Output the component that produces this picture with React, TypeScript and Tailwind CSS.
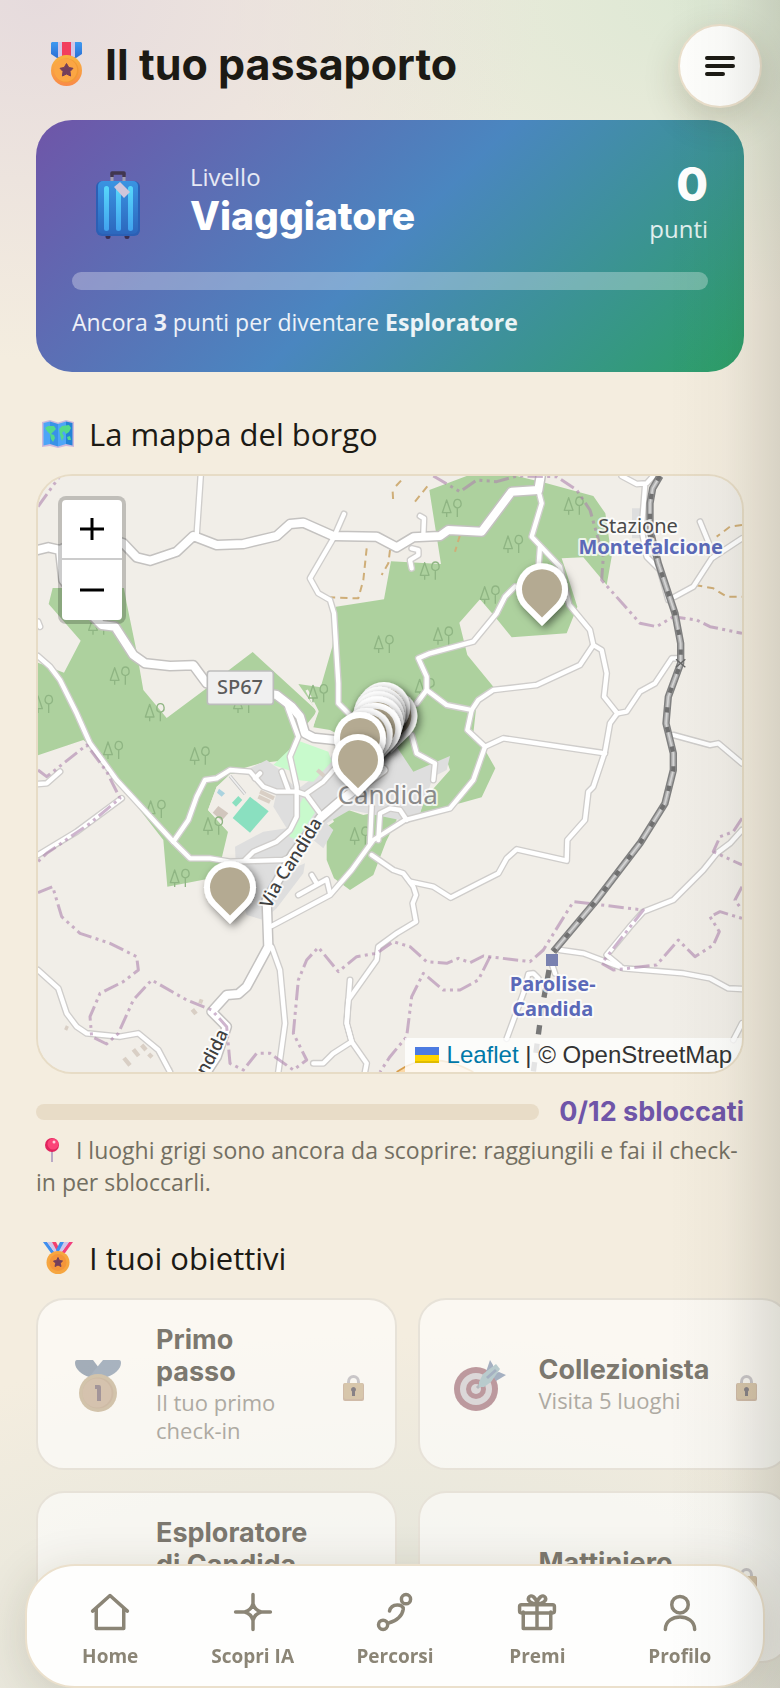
import React from 'react';

interface Achievement {
  title: string;
  text: string;
  icon: React.ReactNode;
}

const roadsMain = [
  'M24 240L55 232L90 240L100 330L170 420L215 465L255 470L310 555L345 580L420 588L490 586L530 640L740 675L785 710L810 740L825 790L850 803L915 810L990 830',
  'M90 240L190 190L280 220L320 262L360 272L440 245L490 198L560 225L640 222L740 198L780 162L820 158L910 198L1040 200L1100 232L1150 202L1230 198L1255 180L1355 185L1445 65L1525 60L1532 18',
  'M1060 900L940 985L870 1045L790 1150L710 1290L715 1430L650 1550L625 1572L590 1575L545 1625L590 1670L560 1760L530 1806',
];

const roadsMinor = [
  'M512 18L500 195',
  'M942 132L910 205L840 325L865 370L900 390L912 430L925 640L925 700L960 735',
  'M24 558L60 590L90 630L140 730L180 820L260 930L430 1115L480 1165L540 1165L600 1175L760 1170L800 1150',
  'M430 1115L475 1050L500 980L525 930L560 925L600 900L660 905L700 950L740 965L800 965L830 975L870 1030',
  'M770 705L805 800L780 860L800 950L800 1040L780 1080L740 1115L670 1145L645 1170',
  'M830 970L880 935L920 890',
  'M755 905L775 960M675 925L690 910',
  'M24 1155L140 1085L275 985',
  'M24 942L50 940L90 905',
  'M24 1500L85 1555L110 1630L140 1670L170 1690L270 1700L325 1690L385 1740L420 1806',
  'M725 1430L750 1500L765 1660L745 1806',
  'M725 1368L900 1275L965 1200L1030 1110L1125 1050L1260 1015L1330 930L1365 830',
  'M1025 1010L1020 1120M1045 1110L1050 1030L1080 1015L1110 1020L1130 1050',
  'M1025 1155L1090 1200L1120 1210L1150 1250L1158 1275L1148 1300L1158 1355L1100 1390L1045 1430L1040 1470L955 1590L950 1660L965 1715L1010 1780L1005 1806',
  'M1140 1235L1210 1250L1262 1283L1350 1238L1405 1210L1430 1165L1460 1138L1610 1172L1612 1110L1665 1050L1675 965L1690 950L1725 845L1740 760L1762 730L1722 680L1730 610L1715 540L1690 525L1680 480L1618 405L1590 290L1505 200L1535 100L1525 60',
  'M1530 230L1525 300',
  'M1455 350L1425 380L1400 430L1330 515L1200 550L1165 565L1190 620L1190 660L1160 700',
  'M1190 660L1250 705L1325 720L1345 690L1390 660L1520 645L1650 585L1690 525',
  'M1325 720L1312 780L1365 830L1420 805L1725 850',
  'M1945 565L1925 565L1875 640L1830 665L1790 725L1762 730',
  'M1930 795L2040 825L2065 820L2136 880',
  'M1775 18L1820 42L1850 40L1870 18M1845 50L1835 180L1850 260L1890 300L1915 390',
  'M2010 155L2045 240M2136 205L2045 265L1990 350L1935 380',
  'M1590 1440L1660 1450L1780 1495L1960 1510L2040 1525L2095 1555L2136 1557',
  'M1730 1455L1800 1370L1840 1325L1930 1290L2020 1200L2060 1150L2100 1120L2136 1080M1730 1455L1770 1488',
  'M1430 1706L1480 1570L1495 1512L1510 1510L1525 1525M1565 1480L1575 1510',
  'M2136 1660L2110 1710',
  'M850 1780L880 1780L910 1750L965 1715L950 1660L960 1530',
  'M805 1275L890 1228L900 1270M845 1215L860 1240',
  'M1170 138L1182 145L1180 195M1145 235L1165 240L1165 255L1140 270L1145 295',
  'M1145 795L1160 850L1215 880L1210 930',
  'M24 455L30 470',
];

const borders = [
  'M24 110L90 18',
  'M24 900L50 920L170 825L230 905L270 985L180 1060L50 1150L24 1175',
  'M24 1268L68 1250L95 1340L150 1390L240 1420L320 1460L325 1500L280 1535L210 1570L180 1640L185 1700L230 1722L265 1690L310 1590L365 1530L470 1590L545 1620L590 1670L600 1780L640 1800L680 1750L720 1750L790 1800L830 1770L790 1690L805 1530L830 1470L865 1432L925 1505L980 1460L1040 1450L1090 1415L1140 1430L1190 1475L1250 1480L1285 1465L1320 1478L1360 1458L1500 1475L1540 1440L1630 1295L1840 1320L1715 1480L1750 1500L1880 1485L1945 1410L1995 1460L2050 1425L2068 1385L2040 1340L2070 1325L2136 1345',
  'M1380 1460L1345 1530L1290 1560L1240 1560L1180 1510L1145 1580L1130 1700L1080 1760L1050 1806',
  'M1210 18L1290 65L1340 30L1400 35L1460 18L1580 20L1640 60L1680 120L1720 260L1715 330L1830 460L1880 470L1930 440L2000 450L2040 470L2136 490',
  'M2136 1045L2110 1085L2070 1100L2050 1145L2136 1185M2136 1250L2115 1290L2136 1320',
];

const tracks = [
  'M1010 235L1000 330L985 385L895 382',
  'M1080 240L1075 280L1055 315',
  'M1088 65L1090 100M1098 48L1115 30M1155 95L1195 45',
  'M1290 195L1275 245',
  'M2136 165L2100 170L2060 200',
  'M1995 345L2050 355L2090 380L2136 380',
];

const railway =
  'M1890 18L1868 55L1860 100V180L1885 280L1935 430L1952 520V580L1915 680L1908 760L1930 850V900L1905 1000L1830 1120L1700 1290L1570 1445';

const trees = [
  [270, 615], [40, 700], [250, 838], [510, 855], [1062, 520], [865, 668], [375, 725], [640, 700],
  [1266, 112], [1632, 105], [1450, 220], [1200, 300], [1380, 372], [1240, 495], [1185, 650],
  [378, 1015], [450, 1222], [550, 1065], [990, 1095], [205, 465],
];

// Drawn back to front, so the southern pins cover the northern ones
const pins = [
  [1536, 358], [1084, 738], [1062, 714], [1050, 728], [1046, 742],
  [1042, 757], [1036, 776], [1010, 792], [990, 804], [984, 870], [600, 1252],
];

const VillageMap: React.FC = () => (
  <svg
    className="block h-full w-full"
    viewBox="24 18 2112 1788"
    preserveAspectRatio="xMidYMid slice"
    fill="none"
    strokeLinejoin="round"
    role="img"
    aria-label="Mappa di Candida"
  >
    <defs>
      <path id="via" d="M722 1318Q752 1250 785 1205T884 1046" />
      <path id="via-sud" d="M512 1845Q560 1770 606 1665" />
      <filter id="pin-shadow" x="-60%" y="-60%" width="240%" height="240%">
        <feDropShadow dx="8" dy="9" stdDeviation="13" floodColor="#000" floodOpacity="0.5" />
      </filter>
    </defs>
    <rect x="24" y="18" width="2112" height="1788" fill="#f1eee8" />

    {/* woods */}
    <g fill="#add19e">
      <path d="M68 354L56 402L152 512L102 608L24 578V856L160 810L180 825L260 930L400 1110L412 1250L578 1218L575 1165L594 1085L534 1020L560 950L640 895L690 880L770 870L800 800L862 724L668 546L600 598L530 655L410 744L340 660L320 545L290 400L282 354Z" />
      <path d="M805 642L872 652L907 530L918 410L1062 388L1083 274L1233 282L1198 60L1310 18H1460L1550 40L1690 78L1726 130L1745 260L1730 345L1660 262L1595 265L1610 310L1642 410L1610 490L1445 502L1395 440L1350 388L1288 458L1312 555L1390 650L1340 700L1330 790L1365 840L1396 895L1355 982L1290 1000L1170 1030L1180 990L1260 900L1250 870L1150 920L1110 925L1050 860L900 780L850 772L862 724Z" />
      <path d="M890 1070L912 1055L905 1040L955 1020L1000 1035L1095 1015L1100 1050L1068 1115L1030 1215L960 1260L912 1225L890 1170Z" />
    </g>
    <path d="M830 660L862 724L845 770" stroke="#f1eee8" strokeWidth="8" />

    {/* built-up area and parks */}
    <g fill="#dedede">
      <path d="M640 905L710 870L750 900L800 960L880 900L920 830L960 830L990 850L1080 800L1150 905L1260 858L1250 900L1210 920L1170 1030L1110 1050L1010 1030L960 1020L890 1060L910 1080L880 1135L850 1110L780 1200L800 1190L825 1180L820 1210L740 1315L700 1350L650 1335L620 1240L615 1130L700 1085L770 1075L730 1010L740 965L700 950Z" />
      <path d="M1806 115H1835V205H1806Z" />
    </g>
    <path d="M730 885L805 812L895 845L905 875L850 935L800 930L790 905Z" fill="#c8facc" />
    <path d="M820 982L860 1020L800 1110L778 1100L795 1030Z" fill="#c8facc" />
    <path d="M534 1020L560 950L600 912L650 910L690 955L735 970L722 1020L735 1050L700 1080L615 1115L594 1085Z" fill="#f1eee8" />
    <path d="M660 980L716 1024L660 1088L608 1044Z" fill="#8ae0c0" />
    <path d="M625 978L637 990L618 1010L606 998Z" fill="#8ae0c0" />
    <path d="M565 1008L595 1030L575 1052L548 1028Z" fill="#d1c6bd" />
    <path d="M567 956L585 970L575 980L561 968Z" fill="#aad3df" />
    <path d="M690 965L732 985M685 980L720 996M862 900L885 920" stroke="#d9cfc5" strokeWidth="12" />
    <path d="M600 918L645 972" stroke="#c4c4c4" strokeWidth="10" />
    <path d="M600 918L645 972" stroke="#eee" strokeWidth="5" />
    <path d="M282 1764L300 1786M310 1738L326 1758M335 1725L348 1740M356 1752L366 1762M487 1618L498 1632M507 1592L518 1596M415 1796L425 1800M105 1672L114 1676" stroke="#d9cfc5" strokeWidth="13" />

    <g stroke="#8fb583" strokeWidth="4">
      {trees.map(([x, y]) => (
        <path
          key={`${x}-${y}`}
          d={`M${x - 16} ${y - 22}L${x - 29} ${y + 16}H${x - 3}ZM${x - 16} ${y + 16}V${y + 29}M${x + 16} ${y + 2}C${x - 2} ${y - 2} ${x + 6} ${y - 24} ${x + 16} ${y - 24}C${x + 28} ${y - 24} ${x + 34} ${y - 2} ${x + 16} ${y + 2}V${y + 29}`}
        />
      ))}
    </g>

    <g stroke="#cfae78" strokeWidth="6" strokeDasharray="22 15">
      {tracks.map((d) => <path key={d} d={d} />)}
    </g>
    <path d="M1100 1806Q1200 1735 1330 1806" fill="#fbd9a8" stroke="#d79e4d" strokeWidth="5" />

    <g strokeLinecap="round">
      <g stroke="#cfcdcb" strokeWidth="21">
        {roadsMinor.map((d) => <path key={d} d={d} />)}
      </g>
      <g stroke="#c4c2c0" strokeWidth="33">
        {roadsMain.map((d) => <path key={d} d={d} />)}
      </g>
      <g stroke="#fff" strokeWidth="13">
        {roadsMinor.map((d) => <path key={d} d={d} />)}
      </g>
      <g stroke="#fff" strokeWidth="24">
        {roadsMain.map((d) => <path key={d} d={d} />)}
      </g>
    </g>

    <g stroke="#ad84ae" strokeOpacity="0.6" strokeWidth="9" strokeDasharray="46 13 9 13 9 13">
      {borders.map((d) => <path key={d} d={d} />)}
    </g>

    {/* railway */}
    <path d={railway} stroke="#808080" strokeWidth="22" />
    <path d={railway} stroke="#b0b0b0" strokeWidth="13" />
    <path d={railway} stroke="#d4d4d4" strokeWidth="5" />
    <path d={railway} stroke="#707070" strokeWidth="13" strokeDasharray="16 44" />
    <path d="M1938 568L1966 592M1966 568L1938 592" stroke="#666" strokeWidth="4" />
    <path d="M1557 1500L1535 1620L1510 1806" stroke="#777" strokeWidth="16" strokeDasharray="28 28" />
    <rect x="1548" y="1452" width="36" height="36" fill="#7981b0" />

    {/* labels */}
    <rect x="532" y="603" width="198" height="100" rx="8" fill="#f0f0f0" stroke="#bdbdbd" strokeWidth="5" />
    <g
      fontFamily='"Noto Sans", sans-serif'
      textAnchor="middle"
      stroke="#fff"
      strokeOpacity="0.8"
      strokeWidth="12"
      style={{ paintOrder: 'stroke' }}
    >
      <text x="630" y="673" fontSize="60" fontWeight="500" fill="#5c5c5c" stroke="none">SP67</text>
      <text x="1824" y="190" fontSize="60" fill="#4a4a4a">Stazione</text>
      <text x="1862" y="252" fontSize="60" fontWeight="700" fill="#5b69b8">Montefalcione</text>
      <text x="1568" y="1564" fontSize="60" fontWeight="700" fill="#5b69b8">Parolise-</text>
      <text x="1568" y="1637" fontSize="60" fontWeight="700" fill="#5b69b8">Candida</text>
      <text x="1073" y="1003" fontSize="78" fill="#8a8a8a">Candida</text>
      <g textAnchor="start" fontSize="54" fontWeight="500" fill="#3f3f3f">
        <text><textPath href="#via">Via Candida</textPath></text>
        <text><textPath href="#via-sud">andida</textPath></text>
      </g>
    </g>

    {pins.map(([x, y]) => (
      <g key={`${x}-${y}`} transform={`translate(${x} ${y})`} filter="url(#pin-shadow)">
        <g transform="rotate(-45)">
          <path d="M-78 0A78 78 0 1 1 0 78H-78Z" fill="#fff" />
          <path d="M-60 0A60 60 0 1 1 0 60H-60Z" fill="#b4aa92" />
        </g>
      </g>
    ))}
  </svg>
);

const MilitaryMedal: React.FC = () => (
  <svg className="h-[44px] w-[31px] shrink-0" viewBox="0 0 31 44" aria-hidden="true">
    <defs>
      <linearGradient id="mm-blue" x1="0" y1="0" x2="0" y2="1">
        <stop stopColor="#3f9af0" /><stop offset="1" stopColor="#2b6fd4" />
      </linearGradient>
      <linearGradient id="mm-gold" x1="0" y1="0" x2="0" y2="1">
        <stop stopColor="#f8b540" /><stop offset="1" stopColor="#f98a48" />
      </linearGradient>
    </defs>
    <path d="M1 0H30L31 1V12L25 16H6L0 12V1Z" fill="url(#mm-blue)" />
    <path d="M7 0H24V15H7Z" fill="#d3c6e6" />
    <path d="M11 0H20V15H11Z" fill="#f23f5e" />
    <circle cx="15.500" cy="28.500" r="15.500" fill="url(#mm-gold)" />
    <circle cx="15.500" cy="28.500" r="12" fill="#f29a35" />
    <circle cx="14.500" cy="28" r="11.500" fill="#fba644" />
    <path d="M15.500 21.500L17.800 25.500L22 26.300L19 29.500L19.600 34L15.500 32L11.400 34L12 29.500L9 26.300L13.200 25.500Z" fill="#743f5b" strokeLinejoin="round" stroke="#743f5b" />
  </svg>
);

const Suitcase: React.FC = () => (
  <svg className="h-[68px] w-[44px]" viewBox="0 0 44 68" aria-hidden="true">
    <defs>
      <linearGradient id="sc-body" x1="0" y1="0" x2="0" y2="1">
        <stop stopColor="#3a94e2" /><stop offset="1" stopColor="#2c67bd" />
      </linearGradient>
      <linearGradient id="sc-rib" x1="0" y1="0" x2="0" y2="1">
        <stop stopColor="#58d8fb" /><stop offset="1" stopColor="#41a2ee" />
      </linearGradient>
    </defs>
    <path d="M16 4V12M28 4V12" stroke="#a39eae" strokeWidth="3" />
    <path d="M16 6V2H28V6" fill="none" stroke="#41364f" strokeWidth="3.500" strokeLinejoin="round" />
    <circle cx="12" cy="65.500" r="2.500" fill="#3a2f52" />
    <circle cx="31" cy="65.500" r="2.500" fill="#3a2f52" />
    <rect y="10" width="44" height="55" rx="6" fill="#2b5fb5" />
    <rect x="2" y="10" width="40" height="53" rx="5" fill="url(#sc-body)" />
    <g fill="url(#sc-rib)">
      <rect x="8" y="15" width="5" height="45" rx="2.500" />
      <rect x="20" y="15" width="5" height="45" rx="2.500" />
      <rect x="32" y="15" width="5" height="45" rx="2.500" />
    </g>
    <path d="M18 16L24 11L34 21L28 27Z" fill="#d0c6da" />
  </svg>
);

const WorldMap: React.FC = () => (
  <svg className="h-[28px] w-[32px] shrink-0" viewBox="0 0 32 28" aria-hidden="true">
    <path d="M0 2L8 0L16 2.500L24 0L32 2V27L24 26L16 28L8 26L0 27Z" fill="#cdb8dc" />
    <path d="M1.500 3L8 1.500V24L1.500 25.500Z" fill="#4da5f7" />
    <path d="M8 1.500L16 4V26.500L8 24Z" fill="#3992e8" />
    <path d="M16 4L24 1.500V24L16 26.500Z" fill="#4da5f7" />
    <path d="M24 1.500L30.500 3V25.500L24 24Z" fill="#2383d8" />
    <path d="M3 8L6 6L12 6L14 9L11 12L9 14L12 15L13 18L11 22L9 19L8 14L5 11ZM17 9L20 6L27 5L29 8L27 12L24 14L22 11L20 13L22 16L20 21L18 15ZM25 17L28 16L29 20L26 20Z" fill="#53d98b" />
  </svg>
);

const Pushpin: React.FC = () => (
  <svg className="inline-block h-[24px] w-[16px] align-[-3px]" viewBox="0 0 16 24" aria-hidden="true">
    <path d="M8 12V24" stroke="#b9a9c6" strokeWidth="2" />
    <circle cx="8" cy="7" r="7" fill="#e0245e" />
    <circle cx="9" cy="6" r="5.500" fill="#fb4478" />
    <circle cx="10" cy="4" r="1.500" fill="#ffd0de" />
  </svg>
);

const SportsMedal: React.FC = () => (
  <svg className="h-[32px] w-[30px] shrink-0" viewBox="0 0 30 32" aria-hidden="true">
    <path d="M0 0H4L12 11L8 11Z" fill="#3f8fee" />
    <path d="M4 0H9L16 11H12Z" fill="#cfc5ea" />
    <path d="M9 0H13L17 8L15 11Z" fill="#f23f6e" />
    <path d="M30 0H26L18 11L22 11Z" fill="#f23f7e" />
    <path d="M26 0H21L14 11H18Z" fill="#cfc5ea" />
    <path d="M21 0H17L13 8L15 11Z" fill="#3f8fee" />
    <circle cx="15" cy="20.500" r="11.500" fill="#f6a640" />
    <circle cx="15" cy="20.500" r="8.500" fill="#f4953a" />
    <path d="M15 15.500L16.500 18.500L19.500 19L17.300 21.200L18 24.500L15 23L12 24.500L12.700 21.200L10.500 19L13.500 18.500Z" fill="#743f5b" stroke="#743f5b" strokeLinejoin="round" />
  </svg>
);

const FirstMedal: React.FC = () => (
  <svg className="h-[52px] w-[46px]" viewBox="0 0 46 52" aria-hidden="true">
    <path d="M2 0H18L24 8L32 17H14C7 15 0 9 0 3Q0 0 2 0Z" fill="#5c7089" />
    <path d="M44 0H28L14 17H32C39 15 46 9 46 3Q46 0 44 0Z" fill="#667b96" />
    <circle cx="23" cy="33" r="19" fill="#b39a72" />
    <circle cx="23" cy="33" r="15.500" fill="#ab8a68" />
    <circle cx="22" cy="33" r="14.500" fill="#b89877" />
    <path d="M20 27H24V41" fill="none" stroke="#5d4652" strokeWidth="4" strokeLinejoin="round" />
  </svg>
);

const Target: React.FC = () => (
  <svg className="h-[52px] w-[52px]" viewBox="0 0 52 52" aria-hidden="true">
    <circle cx="22" cy="29" r="22" fill="#8c4e5a" />
    <circle cx="22" cy="29" r="16" fill="#c4bec4" />
    <circle cx="22" cy="29" r="10" fill="#8c4e5a" />
    <circle cx="22" cy="29" r="5" fill="#c4bec4" />
    <path d="M23 28L31 20" stroke="#7c8490" strokeWidth="3" />
    <path d="M32 12L36 0L39 5V13ZM38 14L45 12L52 15L42 21Z" fill="#60779a" />
    <path d="M25 22L29 14L42 4L46 9L37 22L30 27L25 27Z" fill="#84a8b0" />
    <path d="M33 18L42 10" stroke="#60779a" strokeWidth="3" />
  </svg>
);

const Lock: React.FC = () => (
  <svg className="h-[26px] w-[21px] shrink-0" viewBox="0 0 21 26" aria-hidden="true">
    <path d="M5.500 10V7A5 5.500 0 0 1 15.500 7V10" fill="none" stroke="#aaa6ad" strokeWidth="3" />
    <rect y="8" width="21" height="18" rx="2" fill="#b59478" />
    <rect x="1" y="8" width="19" height="16" rx="2" fill="#c2a67c" />
    <path d="M10.500 12A2.500 2.500 0 0 1 12 16.500V21H9V16.500A2.500 2.500 0 0 1 10.500 12Z" fill="#3c3440" />
  </svg>
);

const Sunrise: React.FC = () => (
  <svg className="h-[24px] w-[46px]" viewBox="0 0 46 24" aria-hidden="true">
    <path d="M10 18A13 13 0 0 1 36 18Z" fill="#cba86f" />
    <path d="M2 21H44" stroke="#7d90b0" strokeWidth="4" />
  </svg>
);

const achievements: Achievement[] = [
  { title: 'Primo passo', text: 'Il tuo primo check-in', icon: <FirstMedal /> },
  { title: 'Collezionista', text: 'Visita 5 luoghi', icon: <Target /> },
  { title: 'Esploratore di Candida', text: 'Visita tutti i luoghi', icon: <WorldMap /> },
  { title: 'Mattiniero', text: 'Visita all’alba', icon: <Sunrise /> },
];

const navItems = [
  {
    label: 'Home',
    icon: <path d="M2.500 11.500L12 3L21.500 11.500M4.500 10V21H19.500V10" />,
  },
  {
    label: 'Scopri IA',
    icon: <path d="M12 2.500V7.500M12 16.500V21.500M2.500 12H7.500M16.500 12H21.500M12 7.500Q13 11 16.500 12Q13 13 12 16.500Q11 13 7.500 12Q11 11 12 7.500Z" />,
  },
  {
    label: 'Percorsi',
    icon: (
      <>
        <circle cx="5.500" cy="19" r="2.500" />
        <circle cx="18" cy="5" r="2.500" />
        <path d="M8.500 18C13 17 16 14 16.500 10.500C16.800 7.500 10 7 9 11.500" />
      </>
    ),
  },
  {
    label: 'Premi',
    icon: (
      <>
        <path d="M4.500 12V21H19.500V12M12 8V21" />
        <rect x="2.500" y="8" width="19" height="4.500" rx="1" />
        <path d="M12 7.500C9 7.500 6.500 6 7.500 4C8.700 2 11.500 4 12 7.500ZM12 7.500C15 7.500 17.500 6 16.500 4C15.300 2 12.500 4 12 7.500Z" />
      </>
    ),
  },
  {
    label: 'Profilo',
    icon: (
      <>
        <circle cx="12" cy="8" r="4.500" />
        <path d="M4 21.500C4 12.500 20 12.500 20 21.500" />
      </>
    ),
  },
];

const App: React.FC = () => {
  return (
    <div className="relative min-h-screen overflow-hidden bg-[#f4eddf] bg-[radial-gradient(ellipse_560px_400px_at_5%_0%,#e6dbdd_0%,transparent_90%),radial-gradient(ellipse_540px_340px_at_90%_0%,#dde8d4_0%,transparent_90%),radial-gradient(ellipse_760px_360px_at_50%_100%,#dfe3da_0%,transparent_100%)] px-9 pb-8 font-['Open_Sans','Noto_Sans',sans-serif] text-[#1c1a14]">
      <header className="-mr-[18px] flex items-center justify-between pt-6">
        <h1 className="flex items-center gap-[23px] pb-1 pl-[15px] font-['Inter',sans-serif] text-[43px] leading-[52px] font-bold">
          <MilitaryMedal />
          Il tuo passaporto
        </h1>
        <button
          type="button"
          aria-label="Menu"
          className="flex h-[84px] w-[84px] items-center justify-center rounded-full border-2 border-[#ebe0cc] bg-[#fefefc] shadow-[0_12px_36px_rgba(60,50,20,0.2)]"
        >
          <svg className="h-[36px] w-[36px]" viewBox="0 0 36 36" fill="none" stroke="currentColor" strokeWidth="4" strokeLinecap="round">
            <path d="M5 10H31M5 18H31M5 26H21" />
          </svg>
        </button>
      </header>

      <section className="mt-3 rounded-[36px] bg-[linear-gradient(135deg,#6f55a8_0%,#4a86c0_50%,#2ca066_100%)] px-9 pt-9 pb-8 text-white">
        <div className="flex items-center">
          <div className="flex w-[92px] justify-center pt-2">
            <Suitcase />
          </div>
          <div className="ml-[26px] flex-1 pb-1">
            <p className="text-[24px] leading-[34px] text-white/85">Livello</p>
            <p className="font-['Inter',sans-serif] text-[39px] leading-[44px] font-extrabold">Viaggiatore</p>
          </div>
          <div className="text-right">
            <p className="font-['Inter',sans-serif] text-[46px] leading-[56px] font-extrabold">0</p>
            <p className="text-[24px] leading-[34px] text-white/85">punti</p>
          </div>
        </div>
        <div className="mt-[26px] h-[18px] rounded-full bg-white/30" role="progressbar" aria-valuenow={0} aria-label="Livello" />
        <p className="mt-[14px] text-[23px] leading-[36px] text-white/90">
          Ancora <b>3</b> punti per diventare <b>Esploratore</b>
        </p>
      </section>

      <h2 className="mt-[42px] flex items-center gap-[15px] pl-[6px] text-[31px] leading-[40px]">
        <WorldMap />
        La mappa del borgo
      </h2>

      <div className="relative mt-5 h-[600px] overflow-hidden rounded-[36px] border-2 border-[#e7dcc6]">
        <VillageMap />
        <div className="absolute top-5 left-5 flex w-[68px] flex-col rounded-[8px] border-4 border-black/20 bg-white bg-clip-padding">
          <button type="button" aria-label="Zoom avanti" className="flex h-[60px] items-center justify-center border-b-2 border-[#ccc]">
            <svg className="h-6 w-6" viewBox="0 0 24 24" stroke="#000" strokeWidth="3"><path d="M0 12H24M12 1V23" /></svg>
          </button>
          <button type="button" aria-label="Zoom indietro" className="flex h-[60px] items-center justify-center">
            <svg className="h-6 w-6" viewBox="0 0 24 24" stroke="#000" strokeWidth="3"><path d="M0 12H24" /></svg>
          </button>
        </div>
        <div className="absolute right-0 bottom-0 flex items-center bg-white/80 px-[10px] font-['Liberation_Sans',Arial,sans-serif] text-[24px] leading-[34px] text-[#333]">
          <svg className="mr-2 h-4 w-6" viewBox="0 0 24 16" aria-hidden="true">
            <path d="M0 0H24V8H0Z" fill="#4c7be1" />
            <path d="M0 8H24V16H0Z" fill="#ffd500" />
            <path d="M0 14H24V16H0Z" fill="#e0bc00" />
          </svg>
          <a href="#leaflet" className="text-[#0078a8]">Leaflet</a>
          <span className="whitespace-pre"> | © OpenStreetMap</span>
        </div>
      </div>

      <div className="mt-5 flex items-center gap-5">
        <div className="h-4 flex-1 rounded-full bg-[#e8dcc7]" role="progressbar" aria-valuenow={0} aria-valuemax={12} aria-label="Luoghi sbloccati" />
        <p className="font-['Inter',sans-serif] text-[27px] leading-[36px] font-bold text-[#6f55a8]">0/12 sbloccati</p>
      </div>
      <p className="mt-1 text-[23px] leading-[32px] text-[#736f62]">
        <span className="mr-[10px] ml-2"><Pushpin /></span> I luoghi grigi sono ancora da scoprire: raggiungili e fai il check-in per sbloccarli.
      </p>

      <h2 className="mt-10 flex items-center gap-4 pl-[7px] text-[31px] leading-[40px]">
        <SportsMedal />
        I tuoi obiettivi
      </h2>

      <ul className="mt-5 -mr-[46px] grid grid-cols-[minmax(0,36fr)_minmax(0,37fr)] gap-[21px]">
        {achievements.map((item) => (
          <li
            key={item.title}
            className="flex items-center rounded-[28px] border-2 border-[#e7e2d8] bg-white/60 px-[31px] py-6"
          >
            <div className="flex w-[57px] shrink-0 justify-center pt-1 opacity-55">{item.icon}</div>
            <div className="mr-[26px] ml-[30px] min-w-0 flex-1">
              <h3 className="font-['Inter',sans-serif] text-[27px] leading-[32px] font-bold text-[#7c786f]">{item.title}</h3>
              <p className="text-[22px] leading-[28px] text-[#aeaaa2]">{item.text}</p>
            </div>
            <div className="pt-2 opacity-60"><Lock /></div>
          </li>
        ))}
      </ul>

      <nav className="fixed right-[15px] bottom-0 left-[25px] flex h-[124px] items-start rounded-[50px] border-2 border-[#ebe0cc] bg-[#fefefd] px-3 pt-[24px] shadow-[0_8px_48px_rgba(60,50,20,0.16)]">
        {navItems.map((item) => (
          <a key={item.label} href={`#${item.label}`} className="flex flex-1 flex-col items-center gap-2 text-[19px] leading-[28px] font-bold text-[#8b8576]">
            <svg className="h-[44px] w-[44px]" viewBox="0 0 24 24" fill="none" stroke="currentColor" strokeWidth="1.900" strokeLinecap="round" strokeLinejoin="round">
              {item.icon}
            </svg>
            {item.label}
          </a>
        ))}
      </nav>

      <div className="pointer-events-none fixed inset-y-0 right-0 w-[110px] bg-[linear-gradient(to_right,transparent,rgba(50,55,40,0.03)_50%,rgba(50,55,40,0.14))]" />
    </div>
  );
};

export default App;
